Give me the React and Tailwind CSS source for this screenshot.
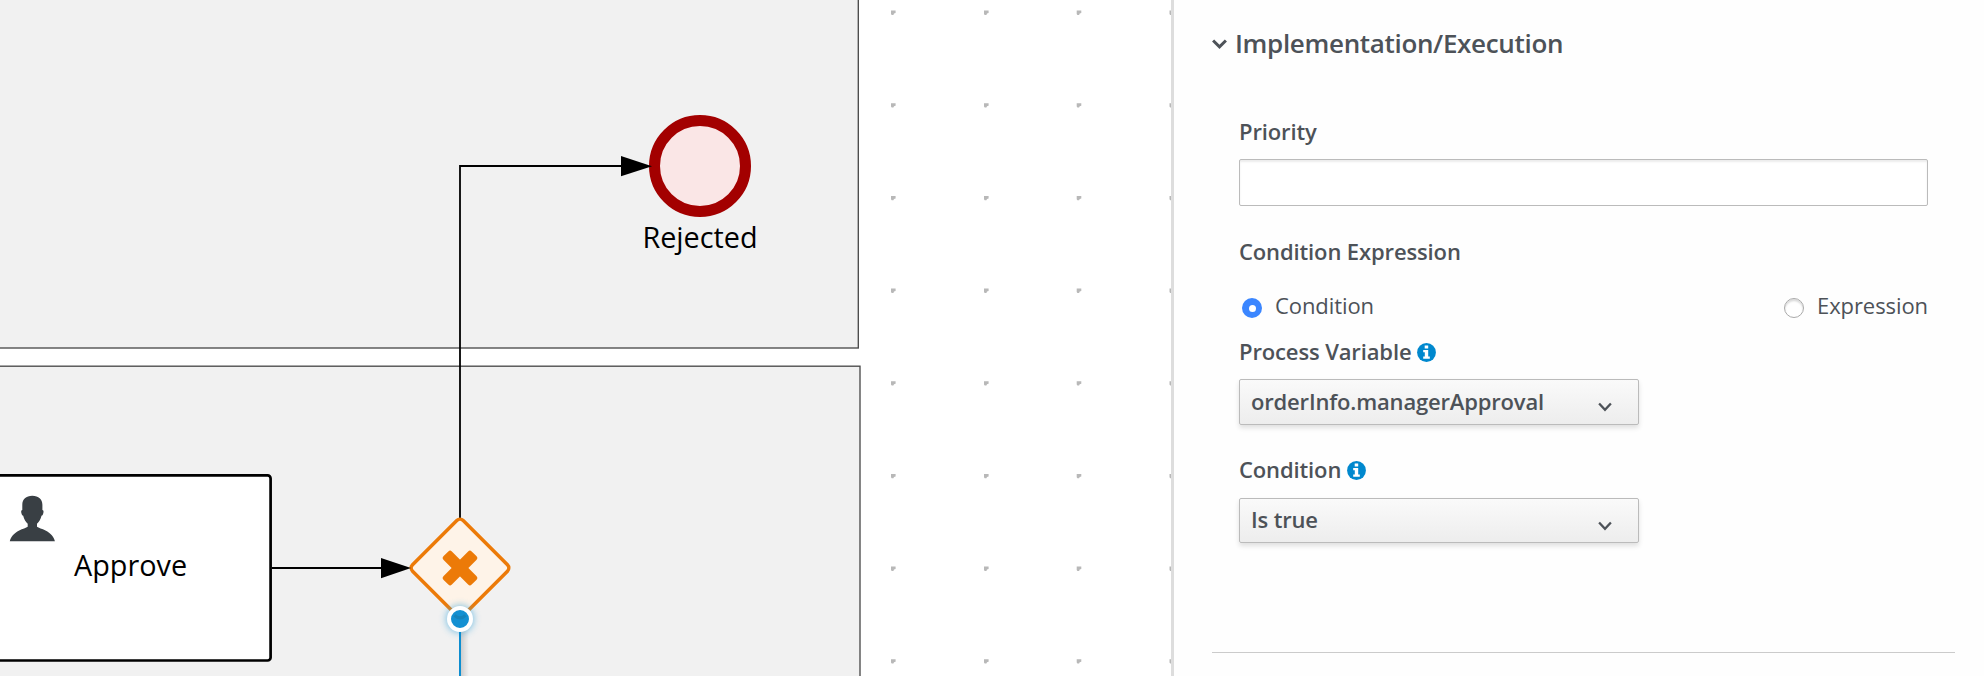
const DOT_X = [893, 986, 1078.7, 1171.5];
const DOT_Y = [12.4, 105.1, 197.8, 290.4, 383.1, 475.8, 568.4, 661.1];

function Canvas() {
  return (
    <svg
      width="1171"
      height="676"
      viewBox="0 0 1171 676"
      className="block shrink-0 bg-white font-['Open_Sans','Noto_Sans',sans-serif]"
    >
      <defs>
        <filter id="glow" x="-100%" y="-100%" width="300%" height="300%">
          <feGaussianBlur stdDeviation="3.5" />
        </filter>
        <linearGradient id="lineShadow" x1="0" x2="1" y1="0" y2="0">
          <stop offset="0" stopColor="#000" stopOpacity="0.15" />
          <stop offset="1" stopColor="#000" stopOpacity="0" />
        </linearGradient>
      </defs>

      {DOT_Y.map((y) =>
        DOT_X.map((x) => (
          <path
            key={`${x}-${y}`}
            d={`M${x - 2} ${y - 1.8}h4.6v2.4l-1.6 .5l-.6 1.4h-1.7l-.7-1z`}
            fill="#b8b8b8"
          />
        ))
      )}

      {/* Lanes */}
      <rect x="-10" y="-10" width="868.3" height="358" fill="#f1f1f1" stroke="#4a4a4a" strokeWidth="1.35" />
      <rect x="-10" y="366.2" width="870" height="330" fill="#f1f1f1" stroke="#4a4a4a" strokeWidth="1.35" />

      {/* Approve task */}
      <rect x="-20" y="475.4" width="290.6" height="185.1" rx="3" fill="#fff" stroke="#000" strokeWidth="2.7" />
      <path
        d="M32.3 495.7c-6.3 0-10 3.6-10 9v5.3c-1.2.2-1.4 1.7-.8 3.5c.4 1.5 1 2.2 1.7 2.3c.8 3.6 2.6 6.3 4.5 8v3c-1.5 1.3-5.2 1.9-8.5 3.6c-5.2 2.7-8.6 6.6-9.4 10.9h45.1c-.8-4.3-4.2-8.2-9.4-10.9c-3.3-1.7-7-2.3-8.5-3.6v-3c1.9-1.7 3.7-4.4 4.5-8c.7-.1 1.3-.8 1.7-2.3c.6-1.800.4-3.300-.8-3.500v-5.300c0-5.400-3.800-9-10.100-9z"
        fill="#393f44"
      />
      <text x="130.5" y="576" fontSize="28.8" textAnchor="middle" fill="#000">Approve</text>

      {/* Sequence flows */}
      <path d="M272 568H384M460 518V166H624" fill="none" stroke="#000" strokeWidth="1.8" />

      {/* Rejected end event */}
      <circle cx="700" cy="166" r="45.5" fill="#fae6e6" stroke="#a30000" strokeWidth="11" />
      <path d="M621 156L652 166.2L621 176.3z" />
      <text x="700" y="248" fontSize="28.8" textAnchor="middle" fill="#000">Rejected</text>

      {/* Exclusive gateway */}
      <rect
        x="424.2"
        y="532.2"
        width="71.6"
        height="71.6"
        rx="4.500"
        transform="rotate(45 460 568)"
        fill="#fef3e8"
        stroke="#ec7a08"
        strokeWidth="3.500"
      />
      <g fill="#ec7a08" transform="rotate(45 460 568)">
        <rect x="440" y="562" width="40" height="12" rx="2.500" />
        <rect x="454" y="548" width="12" height="40" rx="2.500" />
      </g>
      <path d="M381 558L411 568L381 578.2z" />

      {/* Selected outgoing flow and its handle */}
      <rect x="461" y="628" width="8" height="48" fill="url(#lineShadow)" />
      <circle cx="460" cy="619" r="14" fill="#39a5dc" opacity="0.6" filter="url(#glow)" />
      <path d="M460 619V676" stroke="#0088ce" strokeWidth="1.9" />
      <circle cx="460" cy="619" r="11" fill="#1390d2" stroke="#fff" strokeWidth="4" />
      <path d="M454.5 615.300Q460 620.500 465.500 615.300" fill="none" stroke="#1583bb" strokeWidth="3" />
    </svg>
  );
}

function Chevron({ className, width, height, stroke }) {
  return (
    <svg className={className} width={width} height={height} viewBox={`0 0 ${width} ${height}`} fill="none">
      <path
        d={`M1.1 1.5L${width / 2} ${height - 2.2}L${width - 1.1} 1.5`}
        stroke="#4d5258"
        strokeWidth={stroke}
      />
    </svg>
  );
}

function InfoIcon() {
  return (
    <svg className="ml-1.5 mt-[3px]" width="19" height="19" viewBox="0 0 19 19">
      <circle cx="9.5" cy="9.5" r="9.4" fill="#0088ce" />
      <path d="M7.7 2.400h3.500v3H7.700zM6.200 7h5v6.400h1.600v2.300H6.200v-2.300h1.600V9.300H6.200z" fill="#fff" />
    </svg>
  );
}

function Label({ children, info }) {
  return (
    <div className="flex h-[30px] items-center text-[22px] leading-[30px] font-semibold tracking-[-0.13px]">
      <span>{children}</span>
      {info && <InfoIcon />}
    </div>
  );
}

function Select({ value, size, textOffset }) {
  return (
    <button
      type="button"
      className={`flex w-[400px] items-start justify-between rounded-[2px] border border-[#bbb] bg-linear-to-b from-[#fafafa] to-[#ededed] pr-[26px] pl-[11px] text-left text-[22px] leading-[30px] font-semibold tracking-[-0.17px] shadow-[0_3px_5px_rgba(3,3,3,0.12)] ${size}`}
    >
      <span className={textOffset}>{value}</span>
      <Chevron className="mt-[22px]" width={14} height={10} stroke={2.3} />
    </button>
  );
}

function Radio({ label, checked }) {
  return (
    <label className="flex items-center text-[22px] leading-[30px] tracking-[-0.08px]">
      {checked ? (
        <span className="mt-[6px] flex size-5 items-center justify-center rounded-full bg-[#3b86ff]">
          <span className="size-[7px] rounded-full bg-white" />
        </span>
      ) : (
        <span className="mt-[6px] size-5 rounded-full border border-[#aaa] bg-white shadow-[inset_0_2px_2px_rgba(0,0,0,0.15)]" />
      )}
      <span className="ml-[13px]">{label}</span>
    </label>
  );
}

export default function App() {
  return (
    <div className="flex h-[676px] w-[1984px] overflow-hidden bg-white font-['Open_Sans','Noto_Sans',sans-serif] text-[#4d5258]">
      <Canvas />
      <aside className="flex flex-1 flex-col border-l-3 border-[#ddd] bg-[#fefefe] pt-[23px] pr-[29px] pl-[38px]">
        <h2 className="flex h-10 items-center text-[26px] leading-10 font-semibold tracking-[-0.33px]">
          <Chevron className="mt-0.5 mr-2" width={15} height={10} stroke={3} />
          Implementation/Execution
        </h2>
        <div className="mt-[53px] flex flex-col pr-[27px] pl-[27px]">
          <Label>Priority</Label>
          <input
            aria-label="Priority"
            className="mt-[13px] h-[47px] rounded-[2px] border border-[#bbb] bg-white shadow-[inset_0_2px_2px_rgba(3,3,3,0.075)]"
          />
          <div className="mt-[30px]">
            <Label>Condition Expression</Label>
          </div>
          <div className="mt-6 flex h-[30px] justify-between pl-[3px]">
            <Radio label="Condition" checked />
            <Radio label="Expression" />
          </div>
          <div className="mt-4 mb-[13px]">
            <Label info>Process Variable</Label>
          </div>
          <Select value="orderInfo.managerApproval" size="h-[46px]" textOffset="pt-1.5" />
          <div className="mt-[29px] mb-3.5">
            <Label info>Condition</Label>
          </div>
          <Select value="Is true" size="h-[45px]" textOffset="pt-[5px]" />
        </div>
        <hr className="mt-[109px] border-[#cbcbcb]" />
      </aside>
    </div>
  );
}
